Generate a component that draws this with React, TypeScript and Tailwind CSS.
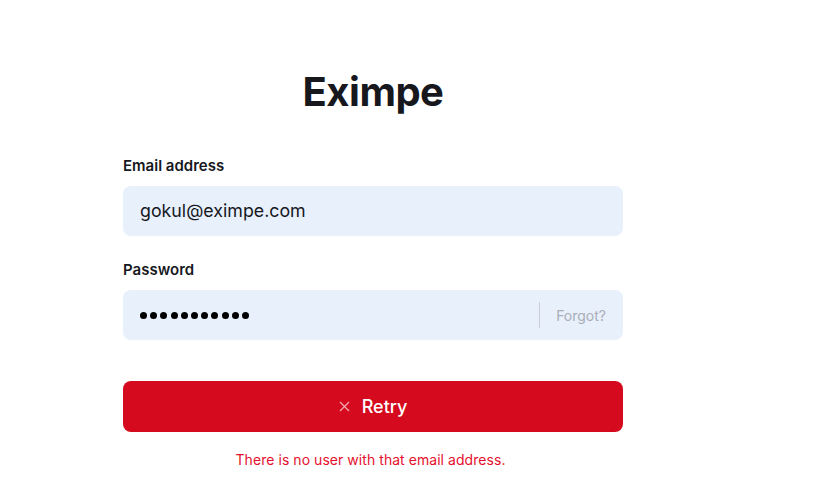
import React from 'react';

export default function App() {
  return (
    <div className="min-h-screen bg-white font-['Inter',sans-serif]">
      <div className="w-[500px] ml-[123px] pt-[64px]">
        <h1 className="text-center text-[40px] leading-[56px] font-bold text-[#16181d] tracking-[-0.5px]">Eximpe</h1>

        <div className="mt-[36px]">
          <label className="block text-[15px] leading-[20px] font-semibold text-[#16181d]">Email address</label>
          <div className="mt-[10px] h-[50px] rounded-[8px] bg-[#e8f0fc] flex items-center px-[17px]">
            <span className="text-[17.8px] text-[#16181d]">gokul@eximpe.com</span>
          </div>
        </div>

        <div className="mt-[24px]">
          <label className="block text-[15px] leading-[20px] font-semibold text-[#16181d]">Password</label>
          <div className="mt-[10px] h-[50px] rounded-[8px] bg-[#e8f0fc] flex items-center pl-[17px] pr-[17px]">
            <span className="flex-1 flex gap-[3.2px]">
              {Array.from({ length: 11 }).map((_, i) => (
                <span key={i} className="w-[7px] h-[7px] rounded-full bg-black" />
              ))}
            </span>
            <span className="h-[26px] w-px bg-[#c9ced6] mr-[16px]" />
            <span className="text-[14px] text-[#a9adb5]">Forgot?</span>
          </div>
        </div>

        <button className="mt-[41px] w-full h-[51px] rounded-[8px] bg-[#d50a1e] flex items-center justify-center gap-[12px] text-white">
          <svg width="11" height="11" viewBox="0 0 11 11" stroke="#f3a6ad" strokeWidth="1.3" fill="none">
            <path d="M1 1L10 10M10 1L1 10" />
          </svg>
          <span className="text-[18px] font-medium">Retry</span>
        </button>

        <p className="mt-[17px] pr-[5px] text-center text-[14px] tracking-[0.05px] text-[#e5102e]">There is no user with that email address.</p>
      </div>
    </div>
  );
}
